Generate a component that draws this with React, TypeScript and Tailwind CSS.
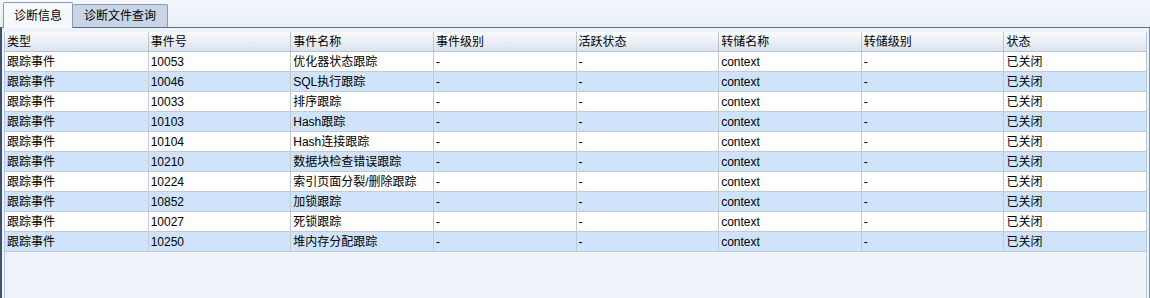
const columns = ["类型", "事件号", "事件名称", "事件级别", "活跃状态", "转储名称", "转储级别", "状态"];

const rows: [string, string][] = [
  ["10053", "优化器状态跟踪"],
  ["10046", "SQL执行跟踪"],
  ["10033", "排序跟踪"],
  ["10103", "Hash跟踪"],
  ["10104", "Hash连接跟踪"],
  ["10210", "数据块检查错误跟踪"],
  ["10224", "索引页面分裂/删除跟踪"],
  ["10852", "加锁跟踪"],
  ["10027", "死锁跟踪"],
  ["10250", "堆内存分配跟踪"],
];

export default function App() {
  return (
    <div
      className="w-[1150px] h-[298px] bg-[#eef2f9] flex flex-col text-[12px] text-black overflow-hidden"
      style={{ fontFamily: '"Liberation Sans", "Noto Sans CJK SC", sans-serif' }}
    >
      {/* Tab strip */}
      <div className="h-[28px] flex items-end pl-[3px] bg-gradient-to-b from-[#f4f6fa] to-[#e9eef6] border-b border-[#5a6e86] shrink-0">
        <div className="relative -mb-px h-[26px] w-[70px] bg-[#f6f8fb] border border-b-0 border-[#8a9ab0] rounded-t-[2px] flex items-center justify-center">
          诊断信息
        </div>
        <div className="h-[23px] w-[95px] bg-[#c9d5e4] border border-l-0 border-b-0 border-[#8a9ab0] rounded-t-[2px] flex items-center justify-center">
          诊断文件查询
        </div>
      </div>

      {/* Panel */}
      <div className="flex-1 flex border-l-2 border-[#3e526b] border-r border-r-[#7d8fa6] pl-[2px] pr-[2px] pt-[4px]">
        <div className="flex-1 border-l border-r border-[#b5c7dc] flex flex-col">
          <div className="grid grid-cols-8 h-[20px] bg-gradient-to-b from-[#fafbfd] to-[#dbe3ee] border-b border-[#b9c3cf]">
            {columns.map((c, i) => (
              <div key={c} className={`pl-[2px] flex items-center ${i > 0 ? "border-l border-[#bcc6d1]" : ""}`}>
                {c}
              </div>
            ))}
          </div>
          {rows.map(([id, name], r) => (
            <div
              key={id}
              className={`grid grid-cols-8 h-[20px] border-b border-[#c3cad2] ${r % 2 === 1 ? "bg-[#cfe4fa]" : "bg-white"}`}
            >
              {["跟踪事件", id, name, "-", "-", "context", "-", "已关闭"].map((v, i) => (
                <div key={i} className={`pl-[2px] flex items-center ${i > 0 ? "border-l border-[#c3cad2]" : ""}`}>
                  {v}
                </div>
              ))}
            </div>
          ))}
        </div>
      </div>
    </div>
  );
}
